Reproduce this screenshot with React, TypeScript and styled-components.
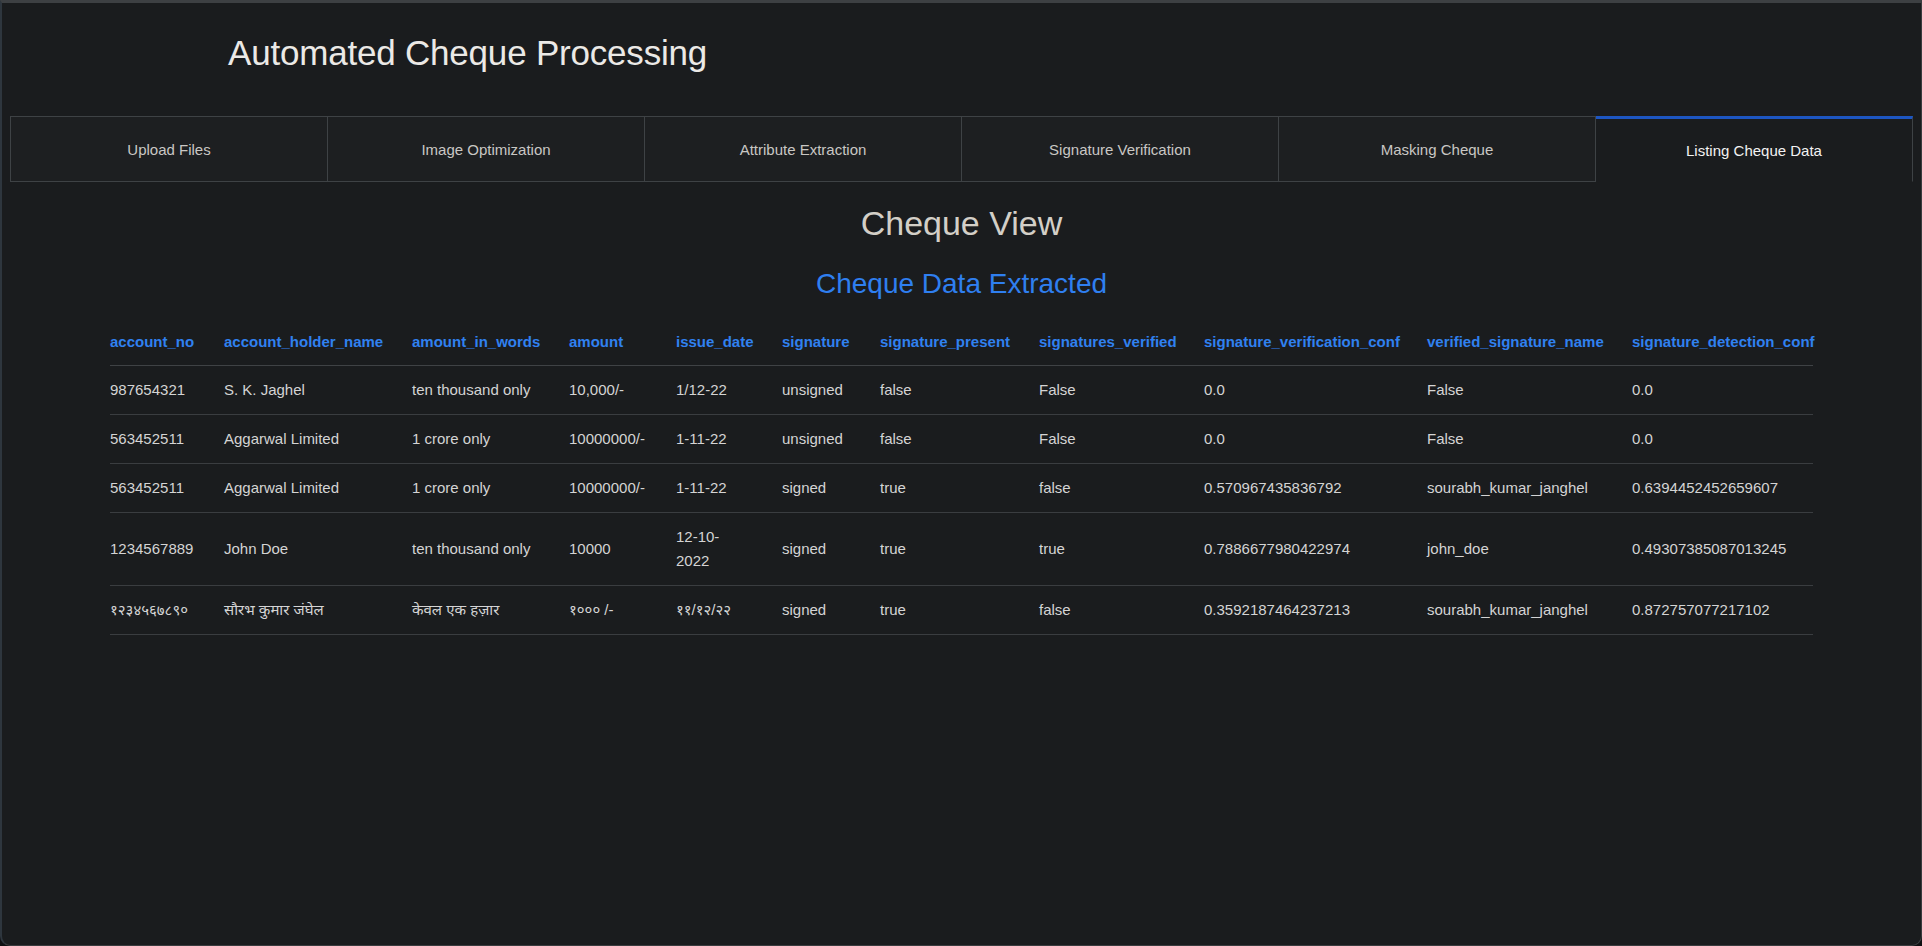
import styled, { createGlobalStyle } from "styled-components";

const GlobalStyle = createGlobalStyle`
  html, body {
    margin: 0;
    padding: 0;
    background: #0f1012;
  }
  body {
    font-family: "Liberation Sans", Arial, "Noto Sans Devanagari", "Noto Sans", sans-serif;
  }
`;

const tabs = [
  "Upload Files",
  "Image Optimization",
  "Attribute Extraction",
  "Signature Verification",
  "Masking Cheque",
  "Listing Cheque Data",
];

const columns = [
  { key: "account_no", width: 114 },
  { key: "account_holder_name", width: 188 },
  { key: "amount_in_words", width: 157 },
  { key: "amount", width: 107 },
  { key: "issue_date", width: 106 },
  { key: "signature", width: 98 },
  { key: "signature_present", width: 159 },
  { key: "signatures_verified", width: 165 },
  { key: "signature_verification_conf", width: 223 },
  { key: "verified_signature_name", width: 205 },
  { key: "signature_detection_conf", width: 181 },
];

const rows: string[][] = [
  ["987654321", "S. K. Jaghel", "ten thousand only", "10,000/-", "1/12-22", "unsigned", "false", "False", "0.0", "False", "0.0"],
  ["563452511", "Aggarwal Limited", "1 crore only", "10000000/-", "1-11-22", "unsigned", "false", "False", "0.0", "False", "0.0"],
  ["563452511", "Aggarwal Limited", "1 crore only", "10000000/-", "1-11-22", "signed", "true", "false", "0.570967435836792", "sourabh_kumar_janghel", "0.6394452452659607"],
  ["1234567889", "John Doe", "ten thousand only", "10000", "12-10-2022", "signed", "true", "true", "0.7886677980422974", "john_doe", "0.49307385087013245"],
  ["१२३४५६७८९०", "सौरभ कुमार जंघेल", "केवल एक हज़ार", "१००० /-", "११/१२/२२", "signed", "true", "false", "0.3592187464237213", "sourabh_kumar_janghel", "0.872757077217102"],
];

export default function App() {
  const active = tabs.length - 1;
  return (
    <>
      <GlobalStyle />
      <Window>
        <Title>Automated Cheque Processing</Title>
        <TabBar>
          {tabs.map((t, i) => (
            <Tab key={t} $active={i === active}>
              {t}
            </Tab>
          ))}
        </TabBar>
        <Panel>
          <ViewTitle>Cheque View</ViewTitle>
          <SectionTitle>Cheque Data Extracted</SectionTitle>
          <Table>
            <colgroup>
              {columns.map((c) => (
                <col key={c.key} style={{ width: c.width }} />
              ))}
            </colgroup>
            <thead>
              <tr>
                {columns.map((c) => (
                  <Th key={c.key}>{c.key}</Th>
                ))}
              </tr>
            </thead>
            <tbody>
              {rows.map((r, i) => (
                <tr key={i}>
                  {r.map((v, j) => (
                    <Td key={j}>{v}</Td>
                  ))}
                </tr>
              ))}
            </tbody>
          </Table>
        </Panel>
      </Window>
    </>
  );
}

const Window = styled.div`
  box-sizing: border-box;
  height: 946px;
  background: #1a1c1e;
  border-top: 3px solid #3d4043;
  border-left: 2px solid #2e363e;
  border-right: 1px solid #3a3c3f;
  border-bottom: 1px solid #3a3c3f;
  border-radius: 0 0 10px 10px;
  overflow: hidden;
  display: flex;
  flex-direction: column;
`;

const Title = styled.h1`
  margin: 0;
  padding: 29px 0 0 226px;
  height: 84px;
  box-sizing: border-box;
  font-size: 35px;
  line-height: 42px;
  font-weight: 400;
  color: #ebe9e6;
  letter-spacing: -0.2px;
  margin-bottom: 29px;
`;

const TabBar = styled.div`
  display: flex;
  margin: 0 8px 0 8px;
`;

const Tab = styled.div<{ $active: boolean }>`
  flex: 1;
  height: 66px;
  box-sizing: border-box;
  display: flex;
  align-items: center;
  justify-content: center;
  font-size: 15px;
  color: ${({ $active }) => ($active ? "#f2f2f2" : "#c9c7c4")};
  background: ${({ $active }) => ($active ? "#1a1c1e" : "#1d1f21")};
  border: 1px solid #3e4245;
  border-top: ${({ $active }) => ($active ? "3px solid #1d56c2" : "1px solid #3e4245")};
  border-bottom: ${({ $active }) => ($active ? "1px solid transparent" : "1px solid #3e4245")};
  padding-top: ${({ $active }) => ($active ? "1px" : "0")};

  & + & {
    border-left: none;
  }
`;

const Panel = styled.div`
  display: flex;
  flex-direction: column;
  align-items: center;
`;

const ViewTitle = styled.h2`
  margin: 21px 0 0;
  font-size: 34px;
  line-height: 41px;
  font-weight: 400;
  color: #d3cfc7;
`;

const SectionTitle = styled.h3`
  margin: 23px 0 0;
  font-size: 28px;
  line-height: 34px;
  font-weight: 400;
  color: #2f7ff0;
`;

const Table = styled.table`
  margin-top: 17px;
  width: 1703px;
  table-layout: fixed;
  border-collapse: collapse;
  font-size: 15px;
  line-height: 24px;
`;

const Th = styled.th`
  text-align: left;
  font-weight: 700;
  color: #3081f0;
  padding: 12px 30px 11px 0;
  white-space: nowrap;
  border-bottom: 1px solid #3f4245;

  &:last-child {
    padding-right: 0;
  }
`;

const Td = styled.td`
  text-align: left;
  color: #d4d4d4;
  padding: 12px 30px 12px 0;
  border-bottom: 1px solid #3a3d40;
  vertical-align: middle;

  &:last-child {
    padding-right: 0;
  }
`;
